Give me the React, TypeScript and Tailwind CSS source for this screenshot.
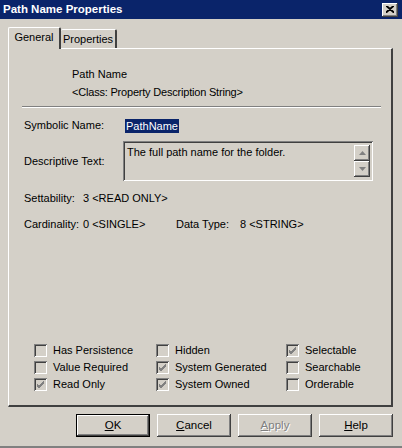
import React from 'react';

const raised =
  'shadow-[inset_-1px_-1px_#404040,inset_1px_1px_#ffffff,inset_-2px_-2px_#808080]';
const sunken =
  'shadow-[inset_1px_1px_#808080,inset_-1px_-1px_#ffffff,inset_2px_2px_#404040,inset_-2px_-2px_#d4d0c8]';

function Check({ checked, label }: { checked?: boolean; label: string }) {
  return (
    <div className="flex items-center h-[17px]">
      <div className={`w-[13px] h-[13px] bg-[#d4d0c8] ${sunken} flex items-center justify-center`}>
        {checked && (
          <svg width="9" height="9" viewBox="0 0 9 9">
            <path d="M1 4 L3 6 L8 1 M1 5 L3 7 L8 2 M1 6 L3 8 L8 3" stroke="#808080" strokeWidth="1" fill="none" />
          </svg>
        )}
      </div>
      <span className="ml-[6px]">{label}</span>
    </div>
  );
}

function Btn({ children, def, disabled }: { children: React.ReactNode; def?: boolean; disabled?: boolean }) {
  return (
    <div
      className={`w-[74px] h-[23px] flex items-center justify-center ${
        def ? 'border border-black' : ''
      }`}
    >
      <div className={`w-full h-full flex items-center justify-center ${raised} ${disabled ? 'text-[#808080] [text-shadow:1px_1px_#ffffff]' : ''}`}>
        {children}
      </div>
    </div>
  );
}

function Arrow({ up }: { up?: boolean }) {
  return (
    <div className={`w-[16px] h-[16px] bg-[#d4d0c8] ${raised} flex items-center justify-center`}>
      <svg width="7" height="4" viewBox="0 0 7 4">
        <path d={up ? 'M3.5 0 L7 4 L0 4 Z' : 'M0 0 L7 0 L3.5 4 Z'} fill="#808080" />
      </svg>
    </div>
  );
}

export default function App() {
  return (
    <div
      className="w-[402px] h-[448px] bg-[#d4d0c8] flex flex-col text-[11px] text-black overflow-hidden border-b-2 border-[#808080]"
      style={{ fontFamily: '"Liberation Sans", Arial, sans-serif' }}
    >
      <div className="h-[19px] bg-[#0a246a] flex items-center justify-between pl-[3px] pr-[4px]">
        <span className="text-white font-bold text-[11.5px]">Path Name Properties</span>
        <div className={`w-[16px] h-[14px] bg-[#d4d0c8] ${raised} flex items-center justify-center`}>
          <svg width="8" height="7" viewBox="0 0 8 7">
            <path d="M0 0 L8 7 M8 0 L0 7 M1 0 L8 6 M7 0 L0 6" stroke="#000" strokeWidth="1.3" fill="none" />
          </svg>
        </div>
      </div>

      <div className="flex pl-[8px] mt-[7px] h-[22px] items-end relative z-10">
        <div className="h-[22px] w-[53px] border-t border-l border-white border-r-2 border-r-[#404040] rounded-t-[2px] bg-[#d4d0c8] flex items-center justify-center -mb-px pb-[2px]">
          General
        </div>
        <div className="h-[19px] w-[56px] border-t border-white border-r-2 border-r-[#404040] rounded-t-[2px] flex items-center justify-center">
          Properties
        </div>
      </div>

      <div className="mx-[8px] mr-[9px] h-[359px] border-t border-l border-white border-r-2 border-b-2 border-r-[#404040] border-b-[#404040] flex flex-col">
        <div className="pl-[63px] pt-[19px] leading-[13px]">
          <div>Path Name</div>
          <div className="mt-[5px] tracking-[-0.2px]">&lt;Class: Property Description String&gt;</div>
        </div>
        <div className="mx-[13px] mr-[10px] mt-[7px] border-t border-[#808080] border-b border-b-white" />

        <div className="flex items-center pl-[15px] mt-[10px] h-[15px]">
          <span className="w-[101px]">Symbolic Name:</span>
          <span className="bg-[#0a246a] text-white px-px leading-[14px]">PathName</span>
        </div>

        <div className="flex items-center pl-[15px] mt-[8px]">
          <span className="w-[99px]">Descriptive Text:</span>
          <div className={`w-[250px] h-[40px] ${sunken} flex pl-[4px] pt-[3px] pr-[3px]`}>
            <span className="flex-1">The full path name for the folder.</span>
            <div className="flex flex-col pt-[1px]">
              <Arrow up />
              <Arrow />
            </div>
          </div>
        </div>

        <div className="flex items-center pl-[15px] mt-[10px] h-[14px]">
          <span className="w-[59px] shrink-0">Settability:</span>
          <span>3 &lt;READ ONLY&gt;</span>
        </div>

        <div className="flex items-center pl-[15px] mt-[12px] h-[14px]">
          <span className="w-[59px] shrink-0">Cardinality:</span>
          <span className="w-[93px] shrink-0">0 &lt;SINGLE&gt;</span>
          <span className="w-[64px] shrink-0">Data Type:</span>
          <span>8 &lt;STRING&gt;</span>
        </div>

        <div className="mt-auto mb-[12px] pl-[25px] grid grid-cols-[122px_130px_1fr]">
          <div className="flex flex-col">
            <Check label="Has Persistence" />
            <Check label="Value Required" />
            <Check checked label="Read Only" />
          </div>
          <div className="flex flex-col">
            <Check label="Hidden" />
            <Check checked label="System Generated" />
            <Check checked label="System Owned" />
          </div>
          <div className="flex flex-col">
            <Check checked label="Selectable" />
            <Check label="Searchable" />
            <Check label="Orderable" />
          </div>
        </div>
      </div>

      <div className="flex justify-end gap-[7px] pr-[9px] mt-[7px] text-[11.5px]">
        <Btn def>
          <span><u>O</u>K</span>
        </Btn>
        <Btn>
          <span><u>C</u>ancel</span>
        </Btn>
        <Btn disabled>
          <span><u>A</u>pply</span>
        </Btn>
        <Btn>
          <span><u>H</u>elp</span>
        </Btn>
      </div>
    </div>
  );
}
